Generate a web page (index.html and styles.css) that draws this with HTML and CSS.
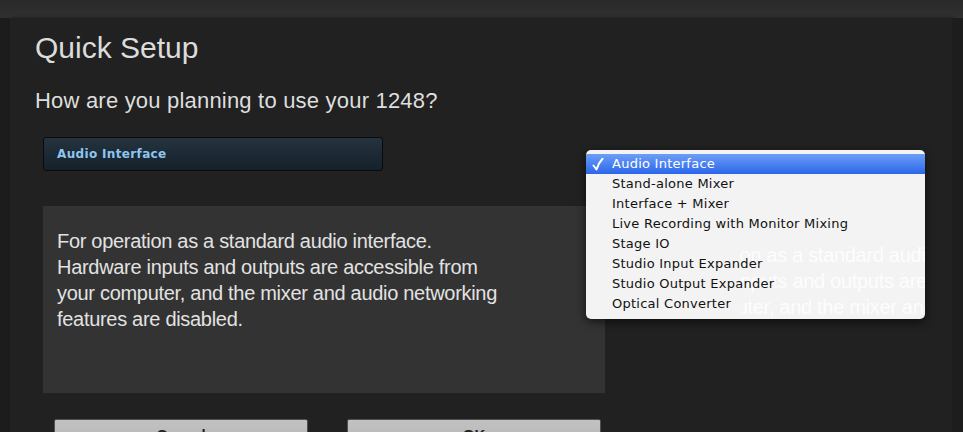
FILE: index.html
```html
<!DOCTYPE html>
<html>
<head>
    <meta charset="UTF-8">
    <title>Quick Setup</title>
    <link rel="stylesheet" href="styles.css">
</head>
<body>

    <div class="topbar"></div>
    <div class="window">
        <div class="dialog">
            <h1 class="title">Quick Setup</h1>
            <h2 class="question">How are you planning to use your 1248?</h2>

            <div class="select">Audio Interface</div>

            <div class="description">
                For operation as a standard audio interface.<br>
                Hardware inputs and outputs are accessible from<br>
                your computer, and the mixer and audio networking<br>
                features are disabled.
            </div>

            <div class="buttons">
                <button class="btn">Cancel</button>
                <button class="btn">OK</button>
            </div>
        </div>
        <div class="side"></div>

        <div class="menu">
            <div class="ghost-clip" aria-hidden="true">
                <div class="ghost">
                    For operation as a standard audio interface.<br>
                    Hardware inputs and outputs are accessible from<br>
                    your computer, and the mixer and audio networking<br>
                    features are disabled.
                </div>
            </div>
            <ul class="menu-list">
                <li class="item selected">
                    <svg class="check" width="12" height="13" viewBox="0 0 12 13">
                        <path d="M1.5 7.5 L4.5 11.5 Q6.5 5 10.5 0.8" fill="none" stroke="#ffffff" stroke-width="2" stroke-linecap="round" stroke-linejoin="round"/>
                    </svg>Audio Interface
                </li>
                <li class="item">Stand-alone Mixer</li>
                <li class="item">Interface + Mixer</li>
                <li class="item">Live Recording with Monitor Mixing</li>
                <li class="item">Stage IO</li>
                <li class="item">Studio Input Expander</li>
                <li class="item">Studio Output Expander</li>
                <li class="item">Optical Converter</li>
            </ul>
        </div>
    </div>

</body>
</html>
```

FILE: styles.css
```css
body {
    margin: 0;
    padding: 0;
    background-color: #1c1c1c;
    font-family: "Liberation Sans", Arial, sans-serif;
    overflow: hidden;
}

.topbar {
    height: 18px;
    background: linear-gradient(#2a2a2a, #303030);
}

.window {
    position: relative;
    display: flex;
    padding-left: 10px;
    height: 414px;
}

.dialog {
    width: 917px;
    padding: 13px 0 0 25px;
    background-color: #212121;
    box-shadow: 2px 0 3px rgba(0, 0, 0, 0.5);
}

.side {
    flex: 1;
    background-color: #1d1d1d;
}

.title {
    margin: 0;
    font-size: 30px;
    line-height: 34px;
    font-weight: normal;
    color: #dcdcdc;
}

.question {
    margin: 23px 0 0 0;
    font-size: 22px;
    line-height: 26px;
    font-weight: normal;
    letter-spacing: 0.2px;
    color: #dedede;
}

.select {
    margin: 23px 0 0 8px;
    width: 325px;
    height: 32px;
    padding-left: 13px;
    box-sizing: content-box;
    border: 1px solid #0b0b0b;
    border-radius: 3px;
    background: linear-gradient(#25333f, #15212b);
    font-family: "DejaVu Sans", sans-serif;
    font-size: 12px;
    font-weight: bold;
    line-height: 32px;
    letter-spacing: 0.35px;
    color: #8ec6ee;
}

.description {
    margin: 35px 0 0 8px;
    width: 548px;
    height: 165px;
    padding: 22px 0 0 14px;
    background-color: #333333;
    font-size: 20px;
    line-height: 26px;
    letter-spacing: -0.3px;
    color: #e2e2e2;
}

.buttons {
    display: flex;
    gap: 39px;
    margin: 26px 0 0 19px;
}

.btn {
    width: 254px;
    height: 28px;
    border: 1px solid #505050;
    border-radius: 2px;
    background: linear-gradient(#c2c2c2, #b4b4b4);
    font-family: "Liberation Sans", Arial, sans-serif;
    font-size: 15px;
    font-weight: bold;
    color: #222222;
    padding: 4px 0 0 0;
    line-height: 18px;
}

/* popup menu over the dialog */
.menu {
    position: absolute;
    left: 586px;
    top: 132px;
    width: 339px;
    height: 169px;
    border-radius: 5px;
    background-color: #f3f3f3;
    box-shadow: 0 3px 10px rgba(0, 0, 0, 0.6);
    overflow: hidden;
}

/* faint see-through copy of the text behind the menu */
.ghost-clip {
    position: absolute;
    left: 154px;
    top: 0;
    right: 0;
    bottom: 0;
    overflow: hidden;
}

.ghost {
    position: absolute;
    left: -94px;
    top: 92px;
    width: 600px;
    font-family: "Liberation Sans", Arial, sans-serif;
    font-size: 20px;
    line-height: 26px;
    letter-spacing: -0.3px;
    color: rgba(255, 255, 255, 0.85);
}

.menu-list {
    position: relative;
    list-style: none;
    margin: 0;
    padding: 4px 0 5px 0;
}

.item {
    position: relative;
    height: 20px;
    padding-left: 26px;
    font-family: "DejaVu Sans", sans-serif;
    font-size: 13px;
    line-height: 20px;
    letter-spacing: 0.25px;
    color: #111111;
}

.item.selected {
    background: linear-gradient(#6d9ef6, #2a66ea);
    color: #ffffff;
}

.check {
    position: absolute;
    left: 6px;
    top: 4px;
}
```
